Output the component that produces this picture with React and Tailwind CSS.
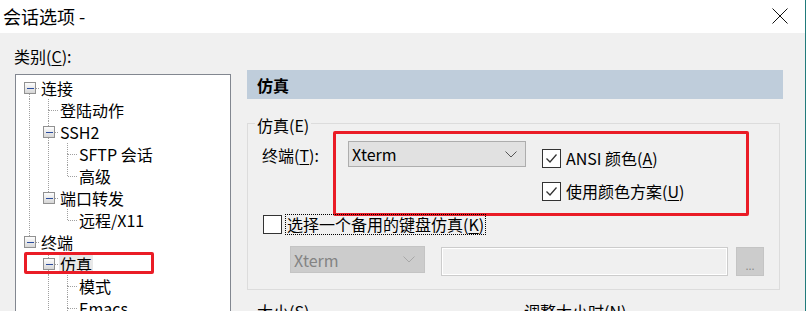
import { useState } from "react";

const FONT = { fontFamily: '"Noto Sans CJK SC", "Noto Sans", sans-serif' };

// tree rows: d = depth, anc = ancestor levels that still have siblings below
const treeRows = [
  { d: 0, t: "连接", box: true, top: false, next: true, anc: [] },
  { d: 1, t: "登陆动作", top: true, next: true, anc: [true] },
  { d: 1, t: "SSH2", box: true, top: true, next: true, anc: [true] },
  { d: 2, t: "SFTP 会话", top: true, next: true, anc: [true, true] },
  { d: 2, t: "高级", top: true, next: false, anc: [true, true] },
  { d: 1, t: "端口转发", box: true, top: true, next: false, anc: [true] },
  { d: 2, t: "远程/X11", top: true, next: false, anc: [true, false] },
  { d: 0, t: "终端", box: true, top: true, next: false, anc: [] },
  { d: 1, t: "仿真", box: true, top: true, next: true, anc: [false], sel: true },
  { d: 2, t: "模式", top: true, next: true, anc: [false, true] },
  { d: 2, t: "Emacs", top: true, next: true, anc: [false, true] },
];

function TreeLines({ row }) {
  const w = 19 * (row.d + 1);
  const cx = 19 * row.d + 9.5;
  return (
    <svg width={w} height="22" className="shrink-0" shapeRendering="crispEdges">
      <defs>
        <linearGradient id="bx" x1="0" y1="0" x2="0" y2="1">
          <stop offset="0" stopColor="#ffffff" />
          <stop offset="1" stopColor="#d4d4d4" />
        </linearGradient>
      </defs>
      {row.anc.map((on, i) =>
        on ? (
          <line key={i} x1={19 * i + 9.5} y1="0" x2={19 * i + 9.5} y2="22" stroke="#a0a0a0" strokeDasharray="1 1" />
        ) : null
      )}
      {row.top && <line x1={cx} y1="0" x2={cx} y2="11" stroke="#a0a0a0" strokeDasharray="1 1" />}
      {row.next && <line x1={cx} y1="11" x2={cx} y2="22" stroke="#a0a0a0" strokeDasharray="1 1" />}
      <line x1={cx} y1="11.5" x2={w} y2="11.5" stroke="#a0a0a0" strokeDasharray="1 1" />
      {row.box && (
        <g>
          <rect x={cx - 5.5} y="5.5" width="11" height="11" fill="url(#bx)" stroke="#919191" />
          <line x1={cx - 3} y1="11.5" x2={cx + 4} y2="11.5" stroke="#2a4c9e" />
        </g>
      )}
    </svg>
  );
}

function Check({ checked }) {
  return (
    <span className="w-[19px] h-[19px] shrink-0 border border-[#333333] bg-white flex items-center justify-center">
      {checked && (
        <svg width="15" height="15" viewBox="0 0 15 15">
          <polyline points="2.5,7.5 6,11 12.5,3.5" fill="none" stroke="#333333" strokeWidth="1.3" />
        </svg>
      )}
    </span>
  );
}

function Chevron({ color }) {
  return (
    <svg width="12" height="7" viewBox="0 0 12 7">
      <polyline points="0.5,0.5 6,6 11.5,0.5" fill="none" stroke={color} strokeWidth="1" />
    </svg>
  );
}

function App() {
  const [ansi, setAnsi] = useState(true);
  const [scheme, setScheme] = useState(true);

  return (
    <div
      className="w-[806px] h-[311px] overflow-hidden bg-[#f0f0f0] border-r border-[#217b7b] text-black text-[16px]"
      style={FONT}
    >
      {/* title bar */}
      <div className="h-[33px] bg-white flex items-center justify-between pl-[3px] pr-[17px]">
        <span className="text-[18px] leading-[22px] -mt-[1px]">会话选项 -</span>
        <svg width="16" height="16" viewBox="0 0 16 16" className="-mt-[2px]">
          <path d="M0.5 0.5 L15.5 15.5 M15.5 0.5 L0.5 15.5" stroke="#111111" strokeWidth="1" />
        </svg>
      </div>

      <div className="flex">
        {/* left: category tree */}
        <div className="w-[231px] pl-[15px] pt-[13px] shrink-0">
          <div className="-ml-[1px] leading-[20px]">
            类别(<span className="underline underline-offset-2">C</span>):
          </div>
          <div className="mt-[8px] h-[240px] w-[216px] bg-white border border-[#828790] pt-[2px] pl-[4px] overflow-hidden">
            {treeRows.map((row, i) => (
              <div key={i} className="relative flex items-center h-[22px]">
                <TreeLines row={row} />
                <span
                  className={
                    "ml-[1px] px-[1px] leading-[19px] whitespace-nowrap " + (row.sel ? "bg-[#e8e8e8]" : "")
                  }
                >
                  {row.t}
                </span>
                {row.sel && (
                  <span className="absolute left-[4px] -top-[1px] w-[130px] h-[22px] border-[3px] border-[#ea1c26] rounded-[2px]" />
                )}
              </div>
            ))}
          </div>
        </div>

        {/* right: emulation page */}
        <div className="ml-[16px] w-[536px] pt-[37px] shrink-0">
          <div className="h-[29px] bg-[#bfcddb] pl-[10px] flex items-center font-bold">仿真</div>

          <div className="mt-[24px] w-[533px] h-[167px] border border-[#dcdcdc]">
            <div className="-mt-[9px] ml-[7px] px-[2px] w-fit bg-[#f0f0f0] leading-[20px]">仿真(E)</div>

            <div className="flex -mt-[4px]">
              <div className="w-[85px] shrink-0 pl-[14px] pt-[14px] leading-[20px] whitespace-nowrap">
                终端(<span className="underline underline-offset-2">T</span>):
              </div>
              <div className="w-[416px] h-[85px] border-[3px] border-[#ea1c26] rounded-[2px] flex items-start">
                <div className="ml-[12px] mt-[7px] w-[178px] h-[26px] bg-[#e1e1e1] border border-[#adadad] flex items-center justify-between pl-[3px] pr-[8px]">
                  <span className="leading-[20px]">Xterm</span>
                  <Chevron color="#555555" />
                </div>
                <div className="ml-[16px] mt-[14px] flex flex-col gap-[13px]">
                  <label className="flex items-center h-[20px] gap-[5px] cursor-default" onClick={() => setAnsi(!ansi)}>
                    <Check checked={ansi} />
                    <span className="leading-[20px] whitespace-nowrap">
                      ANSI 颜色(<span className="underline underline-offset-2">A</span>)
                    </span>
                  </label>
                  <label className="flex items-center h-[20px] gap-[5px] cursor-default" onClick={() => setScheme(!scheme)}>
                    <Check checked={scheme} />
                    <span className="leading-[20px] whitespace-nowrap">
                      使用颜色方案(<span className="underline underline-offset-2">U</span>)
                    </span>
                  </label>
                </div>
              </div>
            </div>

            <div className="flex items-center h-[21px] -mt-[2px] ml-[15px]">
              <Check checked={false} />
              <span className="ml-[3px] px-[1px] leading-[19px] border border-dotted border-black whitespace-nowrap">
                选择一个备用的键盘仿真(<span className="underline underline-offset-2">K</span>)
              </span>
            </div>

            <div className="flex items-start mt-[11px] ml-[42px]">
              <div className="w-[135px] h-[27px] bg-[#cccccc] border border-[#c4c4c4] flex items-center justify-between pl-[3px] pr-[9px] text-[#838383]">
                <span className="leading-[20px]">Xterm</span>
                <Chevron color="#a8a8a8" />
              </div>
              <div className="ml-[16px] mt-[1px] w-[287px] h-[29px] bg-[#f0f0f0] border border-[#cccccc] shadow-[inset_0_0_0_1px_#ffffff]" />
              <div className="ml-[8px] mt-[1px] w-[28px] h-[29px] bg-[#cccccc] border border-[#c4c4c4] flex items-end justify-center pb-[5px] text-[#8a8a8a] text-[11px] leading-[10px]">
                ...
              </div>
            </div>
          </div>

          <div className="flex mt-[11px] leading-[20px] whitespace-nowrap">
            <div className="w-[277px] pl-[10px]">大小(S)</div>
            <div>调整大小时(N)</div>
          </div>
        </div>
      </div>
    </div>
  );
}

export default App;
